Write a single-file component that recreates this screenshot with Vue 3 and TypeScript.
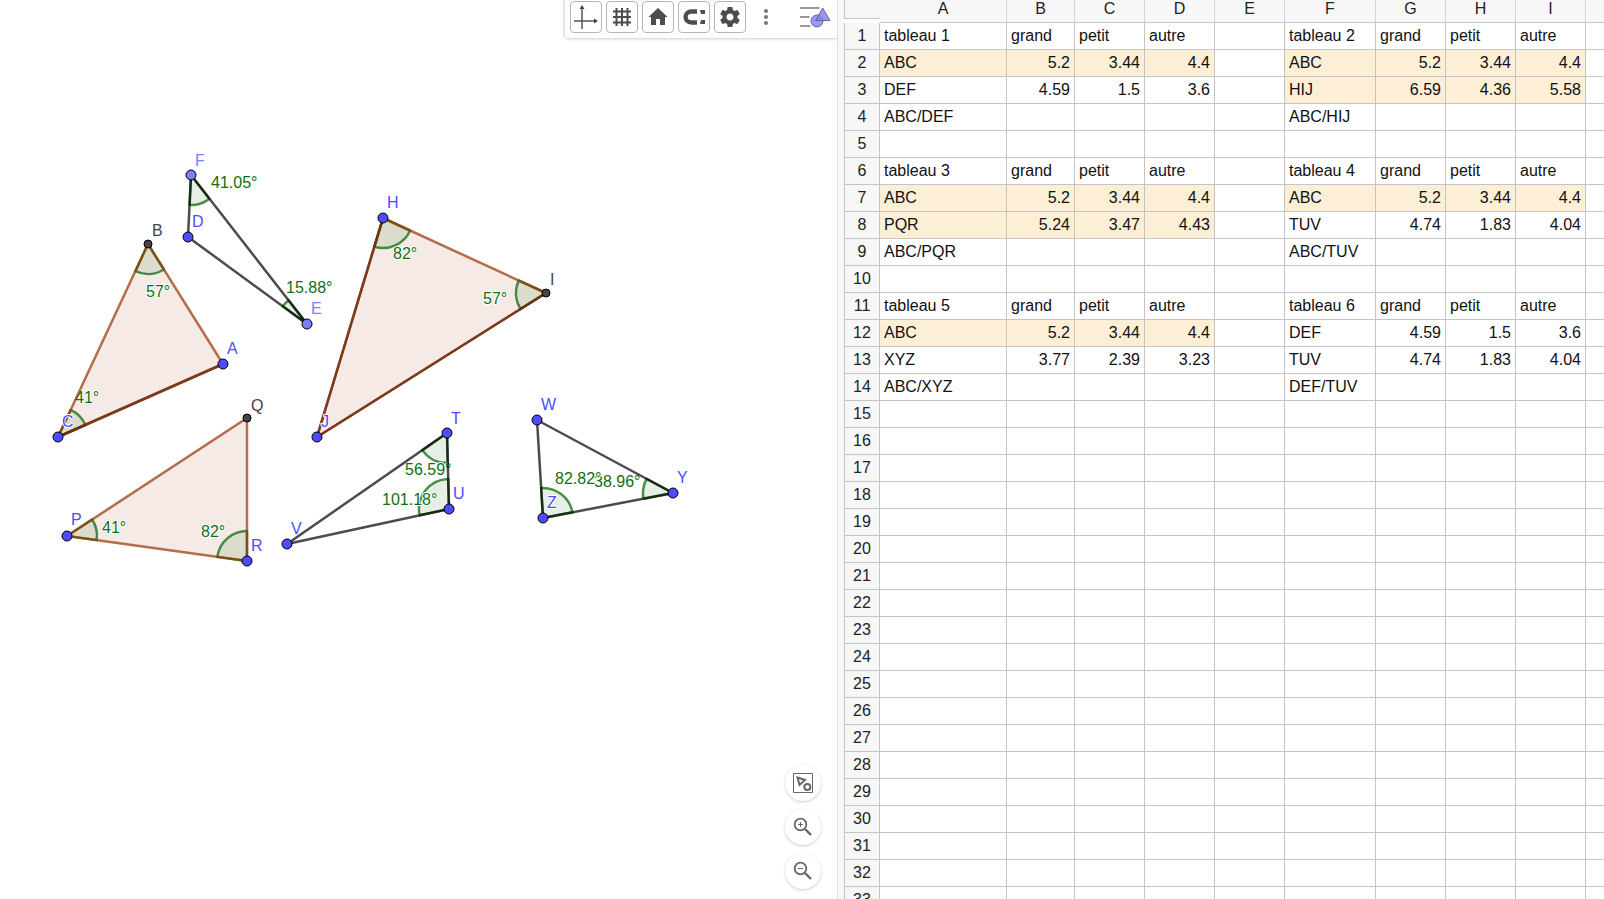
<script setup lang="ts">
type Kind = 'free' | 'onPath' | 'fixed'
interface Point { name: string; x: number; y: number; lx: number; ly: number; kind: Kind }
interface Angle { at: string; from: string; to: string; label: string; lx: number; ly: number }
interface Segment { a: string; b: string; tone: 'dark' | 'brown' }

const points: Point[] = [
  { name: 'A', x: 223, y: 364, lx: 227, ly: 354, kind: 'free' },
  { name: 'B', x: 148, y: 244, lx: 152, ly: 236, kind: 'fixed' },
  { name: 'C', x: 58, y: 437, lx: 62, ly: 427, kind: 'free' },
  { name: 'D', x: 188, y: 237, lx: 192, ly: 227, kind: 'free' },
  { name: 'E', x: 307, y: 324, lx: 311, ly: 314, kind: 'onPath' },
  { name: 'F', x: 191, y: 175, lx: 195, ly: 166, kind: 'onPath' },
  { name: 'H', x: 383, y: 218, lx: 387, ly: 208, kind: 'free' },
  { name: 'I', x: 546, y: 293, lx: 550, ly: 285, kind: 'fixed' },
  { name: 'J', x: 317, y: 437, lx: 321, ly: 427, kind: 'free' },
  { name: 'P', x: 67, y: 536, lx: 71, ly: 525, kind: 'free' },
  { name: 'Q', x: 247, y: 418, lx: 251, ly: 411, kind: 'fixed' },
  { name: 'R', x: 247, y: 561, lx: 251, ly: 551, kind: 'free' },
  { name: 'T', x: 447, y: 433, lx: 451, ly: 424, kind: 'free' },
  { name: 'U', x: 449, y: 509, lx: 453, ly: 499, kind: 'free' },
  { name: 'V', x: 287, y: 544, lx: 291, ly: 534, kind: 'free' },
  { name: 'W', x: 537, y: 420, lx: 541, ly: 410, kind: 'free' },
  { name: 'Y', x: 673, y: 493, lx: 677, ly: 483, kind: 'free' },
  { name: 'Z', x: 543, y: 518, lx: 547, ly: 508, kind: 'free' },
]

const angles: Angle[] = [
  { at: 'B', from: 'C', to: 'A', label: '57°', lx: 146, ly: 297 },
  { at: 'C', from: 'A', to: 'B', label: '41°', lx: 75, ly: 403 },
  { at: 'F', from: 'D', to: 'E', label: '41.05°', lx: 211, ly: 188 },
  { at: 'E', from: 'F', to: 'D', label: '15.88°', lx: 286, ly: 293 },
  { at: 'H', from: 'J', to: 'I', label: '82°', lx: 393, ly: 259 },
  { at: 'I', from: 'H', to: 'J', label: '57°', lx: 483, ly: 304 },
  { at: 'P', from: 'R', to: 'Q', label: '41°', lx: 102, ly: 533 },
  { at: 'R', from: 'Q', to: 'P', label: '82°', lx: 201, ly: 537 },
  { at: 'T', from: 'V', to: 'U', label: '56.59°', lx: 405, ly: 475 },
  { at: 'U', from: 'T', to: 'V', label: '101.18°', lx: 382, ly: 505 },
  { at: 'Y', from: 'W', to: 'Z', label: '38.96°', lx: 594, ly: 487 },
  { at: 'Z', from: 'Y', to: 'W', label: '82.82°', lx: 555, ly: 484 },
]

const polygons = [['A', 'B', 'C'], ['H', 'I', 'J'], ['P', 'Q', 'R']]

const segments: Segment[] = [
  ...['DE', 'EF', 'FD', 'TU', 'UV', 'VT', 'WY', 'YZ', 'ZW', 'CA', 'HJ', 'JI'].map(
    (s): Segment => ({ a: s[0], b: s[1], tone: 'dark' }),
  ),
  ...['AB', 'BC', 'CA', 'HI', 'IJ', 'JH', 'PQ', 'QR', 'RP'].map(
    (s): Segment => ({ a: s[0], b: s[1], tone: 'brown' }),
  ),
]

const byName = new Map(points.map((p) => [p.name, p]))
const pt = (name: string): Point => byName.get(name)!

const polygonPoints = (names: string[]) => names.map((n) => `${pt(n).x},${pt(n).y}`).join(' ')

const RADIUS = 30
function sector(a: Angle): string {
  const o = pt(a.at)
  const edge = (name: string): [number, number] => {
    const q = pt(name)
    const d = Math.hypot(q.x - o.x, q.y - o.y)
    return [o.x + ((q.x - o.x) * RADIUS) / d, o.y + ((q.y - o.y) * RADIUS) / d]
  }
  const [sx, sy] = edge(a.from)
  const [ex, ey] = edge(a.to)
  const cross = (sx - o.x) * (ey - o.y) - (sy - o.y) * (ex - o.x)
  return `M${o.x} ${o.y}L${sx} ${sy}A${RADIUS} ${RADIUS} 0 0 ${cross > 0 ? 1 : 0} ${ex} ${ey}Z`
}

const columns = ['A', 'B', 'C', 'D', 'E', 'F', 'G', 'H', 'I', 'J']
const ROWS = 34

interface Block { col: number; row: number; title: string; lines: [string, string[], boolean][]; ratio: string }
const abc: [string, string[], boolean] = ['ABC', ['5.2', '3.44', '4.4'], true]
const blocks: Block[] = [
  { col: 0, row: 1, title: 'tableau 1', lines: [abc, ['DEF', ['4.59', '1.5', '3.6'], false]], ratio: 'ABC/DEF' },
  { col: 5, row: 1, title: 'tableau 2', lines: [abc, ['HIJ', ['6.59', '4.36', '5.58'], true]], ratio: 'ABC/HIJ' },
  { col: 0, row: 6, title: 'tableau 3', lines: [abc, ['PQR', ['5.24', '3.47', '4.43'], true]], ratio: 'ABC/PQR' },
  { col: 5, row: 6, title: 'tableau 4', lines: [abc, ['TUV', ['4.74', '1.83', '4.04'], false]], ratio: 'ABC/TUV' },
  { col: 0, row: 11, title: 'tableau 5', lines: [abc, ['XYZ', ['3.77', '2.39', '3.23'], false]], ratio: 'ABC/XYZ' },
  {
    col: 5, row: 11, title: 'tableau 6', ratio: 'DEF/TUV',
    lines: [['DEF', ['4.59', '1.5', '3.6'], false], ['TUV', ['4.74', '1.83', '4.04'], false]],
  },
]

interface Cell { text: string; number: boolean; filled: boolean }
const grid: Cell[][] = Array.from({ length: ROWS }, () =>
  columns.map(() => ({ text: '', number: false, filled: false })),
)
for (const b of blocks) {
  ;[b.title, 'grand', 'petit', 'autre'].forEach((t, i) => { grid[b.row - 1][b.col + i].text = t })
  b.lines.forEach(([name, values, filled], r) => {
    const line = grid[b.row + r]
    line[b.col] = { text: name, number: false, filled }
    values.forEach((v, i) => { line[b.col + 1 + i] = { text: v, number: true, filled } })
  })
  grid[b.row + 2][b.col].text = b.ratio
}
</script>

<template>
  <main class="app">
    <section class="graphics" aria-label="Graphique">
      <svg class="canvas" role="img" aria-label="Triangles">
        <polygon v-for="p in polygons" :key="p.join('')" class="poly" :points="polygonPoints(p)" />
        <path v-for="a in angles" :key="a.at" class="angle" :d="sector(a)" />
        <text v-for="a in angles" :key="'l' + a.at" class="label green" :x="a.lx" :y="a.ly">{{ a.label }}</text>
        <line
          v-for="s in segments" :key="s.tone + s.a + s.b" :class="['seg', s.tone]"
          :x1="pt(s.a).x" :y1="pt(s.a).y" :x2="pt(s.b).x" :y2="pt(s.b).y"
        />
        <circle v-for="p in points" :key="p.name" :class="['dot', p.kind]" :cx="p.x" :cy="p.y" :r="p.kind === 'fixed' ? 4 : 5" />
        <text v-for="p in points" :key="'n' + p.name" :class="['label', p.kind]" :x="p.lx" :y="p.ly">{{ p.name }}</text>
      </svg>

      <div class="toolbar">
        <button class="tool" type="button" aria-label="Axes">
          <svg width="30" height="30" viewBox="0 0 30 30">
            <path d="M11 27V5M3 19H24" stroke="#555" stroke-width="1.500" fill="none" />
            <path d="M11 3l2.500 4h-5zM27 19l-4-2.500v5z" fill="#444" />
          </svg>
        </button>
        <button class="tool" type="button" aria-label="Grille">
          <svg width="30" height="30" viewBox="0 0 30 30">
            <path d="M9.500 6v18M15 6v18M20.500 6v18M6 9.500h18M6 15h18M6 20.500h18" stroke="#4d4d4d" stroke-width="2" fill="none" />
          </svg>
        </button>
        <button class="tool" type="button" aria-label="Vue standard">
          <svg width="30" height="30" viewBox="0 0 30 30"><path d="M15 6L5.500 15H8v8h5v-6h4v6h5v-8h2.500z" fill="#4d4d4d" /></svg>
        </button>
        <button class="tool" type="button" aria-label="Capture de points">
          <svg width="30" height="30" viewBox="0 0 30 30">
            <path d="M18 9.500H12.500C4.600 9.500 4.600 20.500 12.500 20.500H18" stroke="#4d4d4d" stroke-width="4.400" fill="none" />
            <path d="M21 8h5v4h-4zM21 22h5v-4h-4z" fill="#4d4d4d" />
          </svg>
        </button>
        <button class="tool" type="button" aria-label="Paramètres">
          <svg width="30" height="30" viewBox="0 0 30 30">
            <path
              transform="translate(3 3)" fill="#4d4d4d"
              d="M19.430 12.980c.04-.32.07-.64.07-.98s-.03-.66-.07-.98l2.110-1.650c.19-.15.24-.42.12-.64l-2-3.460c-.12-.22-.39-.3-.61-.22l-2.490 1c-.52-.4-1.080-.73-1.690-.98l-.38-2.650C14.460 2.180 14.250 2 14 2h-4c-.25 0-.46.18-.49.42l-.38 2.650c-.61.25-1.170.59-1.690.98l-2.490-1c-.23-.09-.49 0-.61.22l-2 3.460c-.13.22-.07.49.12.64l2.110 1.650c-.04.32-.07.65-.07.98s.03.66.07.98l-2.110 1.650c-.19.15-.24.42-.12.64l2 3.460c.12.22.39.3.61.22l2.490-1c.52.4 1.080.73 1.690.98l.38 2.650c.03.24.24.42.49.42h4c.25 0 .46-.18.49-.42l.38-2.650c.61-.25 1.170-.59 1.690-.98l2.490 1c.23.09.49 0 .61-.22l2-3.460c.12-.22.07-.49-.12-.64l-2.110-1.650zM12 15.500c-1.930 0-3.500-1.570-3.500-3.500s1.570-3.500 3.500-3.500 3.500 1.570 3.500 3.500-1.570 3.500-3.500 3.500z"
            />
          </svg>
        </button>
        <button class="plain more" type="button" aria-label="Plus">
          <svg width="32" height="32" viewBox="0 0 32 32" fill="#757575">
            <circle cx="16" cy="10" r="2" /><circle cx="16" cy="16" r="2" /><circle cx="16" cy="22" r="2" />
          </svg>
        </button>
        <button class="plain" type="button" aria-label="Barre de style">
          <svg width="32" height="32" viewBox="0 0 32 32">
            <path d="M0 7h19.500M0 16h9.500M0 25h10.500" stroke="#999" stroke-width="2" fill="none" />
            <circle cx="17" cy="20" r="6" fill="#9999ff" stroke="#666690" />
            <path d="M22.700 7l7.300 12.500h-14.500z" fill="#8080f0" fill-opacity=".8" stroke="#666690" />
          </svg>
        </button>
      </div>

      <div class="zoom">
        <button class="round" type="button" aria-label="Afficher tous les objets">
          <svg width="24" height="24" viewBox="0 0 24 24" fill="none" stroke="#666">
            <path d="M2.500 2.500h19v19h-19z" />
            <path d="M6.500 6.500l7.500 2.500-5.500 5z" stroke-width="2" /><circle cx="16.300" cy="16" r="3" stroke-width="2" />
          </svg>
        </button>
        <button class="round" type="button" aria-label="Zoom avant">
          <svg width="24" height="24" viewBox="0 0 24 24" fill="none" stroke="#666">
            <circle cx="9.500" cy="9.500" r="5.800" stroke-width="1.800" /><path d="M14 14l6 6" stroke-width="2.400" />
            <path d="M9.500 7v5M7 9.500h5" />
          </svg>
        </button>
        <button class="round" type="button" aria-label="Zoom arrière">
          <svg width="24" height="24" viewBox="0 0 24 24" fill="none" stroke="#666">
            <circle cx="9.500" cy="9.500" r="5.800" stroke-width="1.800" /><path d="M14 14l6 6" stroke-width="2.400" />
            <path d="M7 9.500h5" />
          </svg>
        </button>
      </div>
    </section>

    <section class="sheet" aria-label="Tableur">
      <table>
        <colgroup>
          <col class="w-head"><col v-for="c in columns" :key="c" :class="'w-' + c">
        </colgroup>
        <thead>
          <tr>
            <td class="corner"><div></div></td>
            <th v-for="c in columns" :key="c" scope="col">{{ c }}</th>
          </tr>
        </thead>
        <tbody>
          <tr v-for="(line, r) in grid" :key="r">
            <th scope="row">{{ r + 1 }}</th>
            <td v-for="(cell, c) in line" :key="c" :class="{ number: cell.number, filled: cell.filled }">{{ cell.text }}</td>
          </tr>
        </tbody>
      </table>
    </section>
  </main>
</template>

<style>
body { margin: 0; background: #fff; }
</style>

<style scoped>
.app {
  display: grid;
  grid-template-columns: minmax(0, 838fr) minmax(0, 766fr);
  height: 100vh;
  overflow: hidden;
  font-family: "Liberation Sans", Arial, sans-serif;
  font-size: 16px;
}
.graphics {
  position: relative;
  box-sizing: border-box;
  border-right: 1px solid #dcdcdc;
  overflow: hidden;
}
.canvas { display: block; width: 100%; height: 100%; }
.poly { fill: #993300; fill-opacity: 0.1; }
.angle { fill: #006400; fill-opacity: 0.1; stroke: #006400; stroke-opacity: 0.7; stroke-width: 2.5; stroke-linejoin: round; }
.seg { stroke-width: 2.5; stroke-opacity: 0.7; stroke-linecap: round; }
.seg.dark { stroke: #000; }
.seg.brown { stroke: #993300; }
.dot { stroke: #000; stroke-width: 1; }
.dot.free { fill: #4d4dff; }
.dot.onPath { fill: #7d7dff; }
.dot.fixed { fill: #444; }
.label { font-size: 16px; stroke: #fff; stroke-width: 2; stroke-linejoin: round; paint-order: stroke; }
.label.green { fill: #0f700f; }
.label.free { fill: #4d4dff; }
.label.onPath { fill: #7d7dff; }
.label.fixed { fill: #444; }

.toolbar {
  position: absolute;
  top: 0;
  right: 0;
  display: flex;
  gap: 4px;
  padding: 1px 5px 5px 5px;
  background: #fff;
  border-bottom-left-radius: 4px;
  box-shadow: 0 0 3px 1px #ccc;
}
button { display: flex; align-items: center; justify-content: center; padding: 0; background: #fff; border: 0; cursor: pointer; }
.tool { box-sizing: border-box; width: 32px; height: 32px; border: 1px solid #b4b4bc; border-radius: 4px; }
.plain { width: 32px; height: 32px; }
.more { margin-right: 14px; }

.zoom { position: absolute; right: 16px; bottom: 10px; display: flex; flex-direction: column; gap: 8px; }
.round { width: 36px; height: 36px; border-radius: 50%; box-shadow: 0 1px 3px #ccc; }

.sheet { padding-left: 6px; background: #f8f8f8; overflow: hidden; }
table { width: 814px; table-layout: fixed; border-collapse: separate; border-spacing: 0; background: #fff; }
.w-head { width: 36px; }
.w-A { width: 127px; }
.w-B { width: 68px; }
.w-C, .w-D, .w-E, .w-G, .w-H, .w-I { width: 70px; }
.w-F { width: 91px; }
th, td {
  box-sizing: border-box;
  height: 27px;
  padding: 0 4px;
  border: solid #c4c4c4;
  border-width: 0 1px 1px 0;
  line-height: 26px;
  font-weight: 400;
  text-align: left;
  color: #111;
  white-space: nowrap;
}
th { padding: 0; background: #f7f7f7; text-align: center; color: #222; }
tbody th { border-left-width: 1px; }
thead th { height: 23px; padding-bottom: 5px; line-height: 17px; border-right-color: #d4d4d4; }
.corner { height: 23px; padding: 0; border-width: 0; vertical-align: top; }
.corner div { height: 18px; background: #f7f7f7; border-left: 1px solid #c4c4c4; border-bottom: 1px solid #c4c4c4; }
.number { text-align: right; }
.filled { background: #fdeed6; }
</style>
